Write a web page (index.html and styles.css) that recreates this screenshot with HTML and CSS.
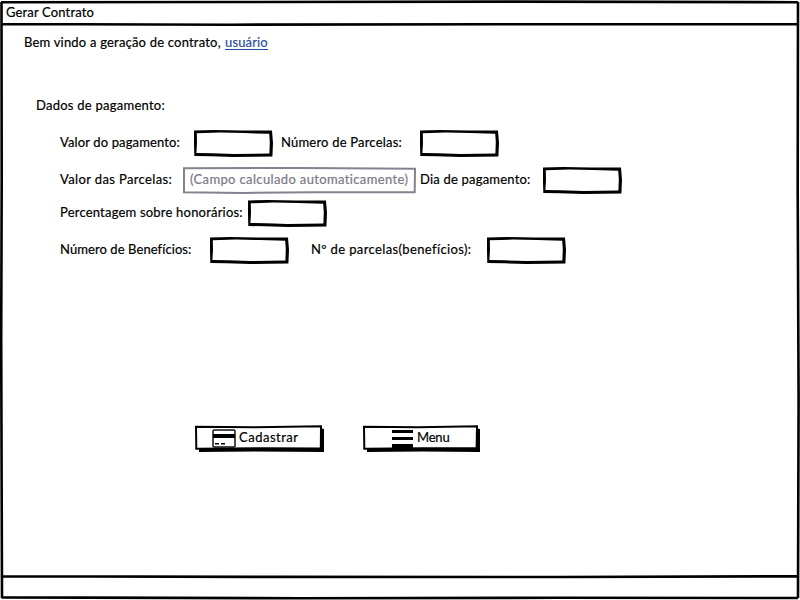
FILE: index.html
```html
<!DOCTYPE html>
<html lang="pt-BR">
<head>
<meta charset="utf-8">
<title>Gerar Contrato</title>
<link rel="stylesheet" href="styles.css">
</head>
<body>
<svg class="defs" width="0" height="0" aria-hidden="true">
  <symbol id="box" viewBox="0 0 79 27">
    <path fill-rule="evenodd" d="M0 .4L20 0 48 .5 78 .6 79 13 78.4 26.4 60 26.7 40 27 17 26.3.3 26 0 14ZM2.8 3.3L3 13 2.4 23 18 23.3 40 24 75.4 23.4 75.8 12 75.2 3.8 50 3.1 26 2.6Z"/>
  </symbol>
</svg>
<div class="window">
  <svg class="frame" viewBox="0 0 800 600" aria-hidden="true">
    <path d="M1 2.2L240 2 520 1.6 798 2.2M2 24L230 24.7 500 24.3 798 24.2M1.5 2L1.7 180 1.2 340 2 598M798 2L797.7 190 798.6 400 798 598M2 576.2L280 576.9 560 577 798 576.3M1.5 597.4L300 598.2 560 597.8 798 598"/>
  </svg>
  <header class="title"><span class="t-title">Gerar Contrato</span></header>
  <main class="content">
    <p class="welcome"><span class="t-welcome">Bem vindo a geração de contrato,</span><a class="user">usuário</a></p>
    <h2 class="heading">Dados de pagamento:</h2>
    <form class="form">
      <div class="row r1">
        <label class="l-valor">Valor do pagamento:</label><svg class="field"><use href="#box"/></svg>
        <label class="l-numero">Número de Parcelas:</label><svg class="field"><use href="#box"/></svg>
      </div>
      <div class="row r2">
        <label class="l-parcelas">Valor das Parcelas:</label>
        <div class="auto"><svg class="auto-frame" viewBox="0 0 233 27"><path d="M1 1.2L120 1 232 1.8 231.7 25.3 130 25.2 60 26 1 25.2Z"/></svg><span>(Campo calculado automaticamente)</span></div>
        <label class="l-dia">Dia de pagamento:</label><svg class="field"><use href="#box"/></svg>
      </div>
      <div class="row r3">
        <label class="l-percent">Percentagem sobre honorários:</label><svg class="field"><use href="#box"/></svg>
      </div>
      <div class="row r4">
        <label class="l-benef">Número de Benefícios:</label><svg class="field"><use href="#box"/></svg>
        <label class="l-nparc">Nº de parcelas(benefícios):</label><svg class="field"><use href="#box"/></svg>
      </div>
    </form>
    <div class="actions">
      <div class="button save">
        <svg class="button-frame" viewBox="0 0 130 28"><path d="M4 22H124V3L129 4 129 27 60 26.5 4 27Z"/><path class="face" d="M1 1.7L60 2.2 126 1.3 125.8 23.6 70 23.2 1.3 23.8Z"/></svg>
        <svg class="card" viewBox="0 0 24 19"><rect class="card-edge" x="1" y="1" width="22" height="17" rx="1"/><path d="M1 5h22v4H1zM3 14h4v1.5H3zM9 14h4v1.5H9z"/></svg>
        <span>Cadastrar</span>
      </div>
      <div class="button menu">
        <svg class="button-frame" viewBox="0 0 118 28"><path d="M4 22H112V3L117 4 117 27 60 26.5 4 27Z"/><path class="face" d="M1 1.7L55 2.2 114 1.3 113.6 23.2 60 23.2 1.3 23.8Z"/></svg>
        <svg class="bars" viewBox="0 0 21 18"><path d="M0 0h21v3H0zM0 7h21v3H0zM0 14h21v4H0z"/></svg>
        <span>Menu</span>
      </div>
    </div>
  </main>
</div>
</body>
</html>
```
FILE: styles.css
```css
* { box-sizing: border-box; }
body { margin: 0; background: #fff; color: #000; font: 13px/18px Lato, "Open Sans", sans-serif; font-variant-ligatures: none; -webkit-text-stroke: 0.2px currentColor; }
.defs { position: absolute; }
.window { position: relative; width: 800px; height: 600px; overflow: hidden; }
.frame { position: absolute; inset: 0; width: 800px; height: 600px; fill: none; stroke: #000; stroke-width: 2.6; }
.title { height: 25px; padding: 3px 0 0 6px; letter-spacing: 0.15px; }
.content { padding: 8px 0 0 24px; }
.welcome { display: flex; margin: 0; height: 18px; }
.t-welcome { width: 201px; letter-spacing: 0.2px; white-space: nowrap; }
.user { height: 17px; color: #1f4f9c; border-bottom: 1px solid #1f4f9c; letter-spacing: 0.15px; }
.heading { margin: 45px 0 0 12px; font-size: 13px; font-weight: 400; letter-spacing: 0.25px; }
.form { padding: 16px 0 0 36px; }
.row { display: flex; height: 27px; margin-bottom: 10px; }
.r2 { margin-bottom: 6px; }
label { padding-top: 3px; white-space: nowrap; flex: none; letter-spacing: 0.2px; }
.field { width: 79px; height: 27px; flex: none; }
.l-valor { width: 134px; letter-spacing: 0.13px; }
.l-numero { width: 139px; margin-left: 8px; }
.l-parcelas { width: 123px; letter-spacing: 0.37px; }
.l-dia { width: 123px; margin-left: 4px; }
.l-percent { width: 188px; }
.l-benef { width: 150px; letter-spacing: 0.08px; }
.l-nparc { width: 176px; margin-left: 22px; letter-spacing: 0.37px; }
.auto { position: relative; width: 233px; height: 27px; padding: 3px 0 0 7px; color: #7c7886; white-space: nowrap; letter-spacing: 0.36px; }
.auto-frame { position: absolute; inset: 0; width: 233px; height: 27px; fill: none; stroke: #85818f; stroke-width: 2; }
.actions { display: flex; gap: 38px; margin: 161px 0 0 171px; }
.button { position: relative; display: flex; height: 28px; padding-top: 3px; }
.button > * { position: relative; }
.button .button-frame { position: absolute; left: 0; top: 0; height: 28px; }
.save { width: 130px; padding-left: 17px; letter-spacing: 0.5px; }
.save .button-frame { width: 130px; }
.menu { width: 118px; padding-left: 29px; letter-spacing: -0.2px; }
.menu .button-frame { width: 118px; }
.face { fill: #fff; stroke: #000; stroke-width: 2; }
.card { width: 24px; height: 19px; margin: 1px 3px 0 0; }
.card-edge { fill: #fff; stroke: #111; stroke-width: 1.5; }
.bars { width: 21px; height: 18px; margin: 2px 4px 0 0; }
```
